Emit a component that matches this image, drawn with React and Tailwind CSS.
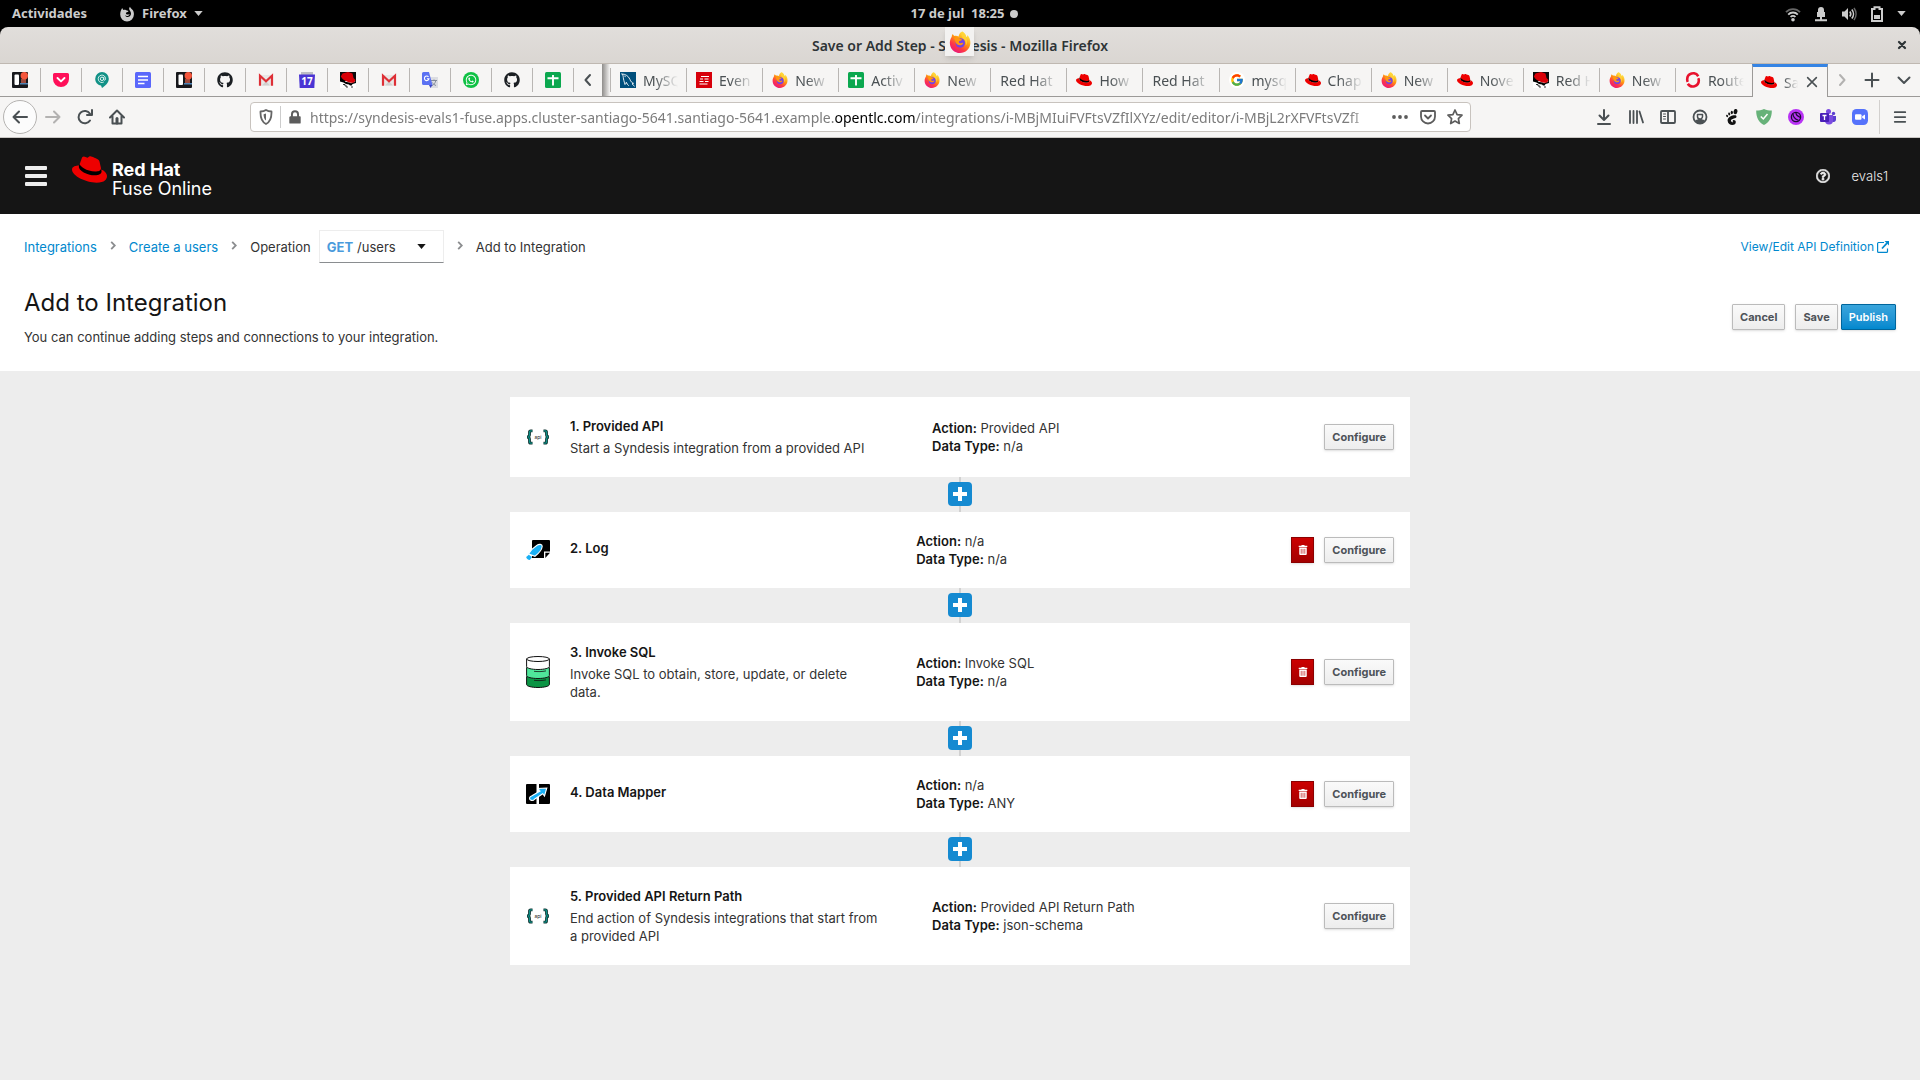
import React from "react";
import { FaGithub, FaWhatsapp, FaTrashAlt, FaRegQuestionCircle, FaCaretDown } from "react-icons/fa";
import { FcGoogle } from "react-icons/fc";

/* ---------- favicons ---------- */

function Svg({ children, size = "size-4", box = "0 0 16 16" }) {
  return (
    <svg viewBox={box} className={`${size} shrink-0`} fill="none" aria-hidden="true">
      {children}
    </svg>
  );
}

function Hat({ size = "size-4" }) {
  return (
    <Svg size={size} box="0 0 24 24">
      <ellipse cx="12.5" cy="11.8" rx="8" ry="4" transform="rotate(16 12.5 11.8)" fill="#000" />
      <path fill="#e00" d="M16.009 13.386c1.577 0 3.86-.326 3.86-2.202a1.765 1.765 0 0 0-.04-.431l-.94-4.08c-.216-.898-.406-1.305-1.982-2.093-1.223-.625-3.888-1.658-4.676-1.658-.733 0-.947.946-1.822.946-.842 0-1.467-.706-2.255-.706-.757 0-1.25.515-1.63 1.576 0 0-1.06 2.99-1.197 3.424a.81.81 0 0 0-.028.245c0 1.162 4.577 4.974 10.71 4.974m4.101-1.435c.218 1.032.218 1.14.218 1.277 0 1.765-1.984 2.745-4.593 2.745-5.895.004-11.06-3.451-11.06-5.734a2.326 2.326 0 0 1 .19-.925C2.746 9.415 0 9.794 0 12.217c0 3.969 9.405 8.861 16.851 8.861 5.71 0 7.149-2.582 7.149-4.62 0-1.605-1.387-3.425-3.887-4.512" />
    </Svg>
  );
}

function FirefoxLogo({ size = "size-4" }) {
  return (
    <Svg size={size} box="0 0 24 24">
      <defs>
        <linearGradient id="ff-body" x1="0.8" y1="0.05" x2="0.2" y2="1">
          <stop offset="0" stopColor="#fff14f" />
          <stop offset="0.4" stopColor="#ff980e" />
          <stop offset="0.7" stopColor="#ff3647" />
          <stop offset="1" stopColor="#e31587" />
        </linearGradient>
      </defs>
      <path fill="url(#ff-body)" d="M14.5.5c3 1.800 4 4 4.300 6 1-.2 1.200-1.500 1.200-2.200 2.400 2.500 3.500 5.500 3.300 9C23 19.500 18 24 12 24S.9 19.200.9 13c0-2.500.8-4.700 2-6.400 0-1.400.5-2.500 1.200-3.300.5 1 1.100 1.700 1.900 2.100 1.700-.3 3.200-.1 4.500.7C10.800 3.500 12 1.500 14.500.5z" />
      <circle cx="12.300" cy="13" r="5.200" fill="#7542e5" />
      <path fill="#ff980e" d="M5.500 7.500c2.200-1 4.800-.5 6.300.8l2.400 1c-.3 1.200-1.700 1.500-2.900 1.700-.8.500-.6 1.400.1 2.100 1.200.6 2.500-.1 3.500-.3.700.2.700.9.200 1.300-2.100 2.300-6.400 1.500-7.600-1.400C6.500 11 6.200 9 5.500 7.500z" />
      <path fill="#ffd43a" d="M14.500.5c3 1.800 4.500 4.500 4.400 7.500 1.400 2.500 1.200 6-.7 8.200.6-3.200 0-5.800-2-7.500C14 7 12.600 4 14.500.5z" opacity=".85" />
    </Svg>
  );
}

const Board = () => (
  <Svg>
    <rect width="16" height="16" rx="1" fill="#17181c" />
    <rect x="2.500" y="2.500" width="4.500" height="10.500" rx="1" fill="#fff" />
    <rect x="9" y="7" width="5" height="4" fill="#9c4a3c" />
    <rect x="8" y="11" width="8" height="1.500" fill="#4f83b5" />
    <circle cx="12.300" cy="3.800" r="3.700" fill="#f4563c" />
  </Svg>
);
const Pocket = () => (
  <Svg>
    <path d="M1.500 1h13A1.500 1.500 0 0 1 16 2.500V7a8 8 0 0 1-16 0V2.500A1.500 1.500 0 0 1 1.500 1z" fill="#ff1059" />
    <path d="m4.500 6 3.500 3.400L11.500 6" stroke="#fff" strokeWidth="1.900" strokeLinecap="round" strokeLinejoin="round" />
  </Svg>
);
const Pin = () => (
  <Svg>
    <path d="M8 0a6.800 6.800 0 0 1 6.800 6.800C14.800 11 11 14 8 16l-1-2.500C3.500 13 1.200 10.300 1.200 6.800A6.800 6.800 0 0 1 8 0z" fill="#129287" />
    <circle cx="8" cy="6.800" r="1.700" stroke="#e8f5f4" strokeWidth="1" />
    <path d="M9.800 5v2.300c0 1.400 1.800 1.200 1.800-.5A3.700 3.700 0 1 0 9.800 10" stroke="#e8f5f4" strokeWidth=".9" />
  </Svg>
);
const Doc = () => (
  <Svg>
    <rect width="16" height="16" rx="1.500" fill="#5a67fb" />
    <path d="M3 4.500h10M3 8h10M3 11.500h6.500" stroke="#fff" strokeWidth="1.700" />
  </Svg>
);
const GitHub = () => <FaGithub className="size-4 shrink-0 text-[#1b1f23]" aria-hidden="true" />;
const Gmail = () => (
  <Svg>
    <path d="M2 3h12v10.500H2z" fill="#e9e7e6" />
    <path d="M4 13.500 8 9l4 4.500z" fill="#d2d0cf" />
    <path d="M2 13.700V3.800l6 5.400 6-5.400v9.900" stroke="#de2f36" strokeWidth="2.200" />
  </Svg>
);
const Calendar = () => (
  <Svg>
    <path d="M2 0h12v4H2z" fill="#bdbdc4" />
    <path d="M0 2.500h16L15.300 16H.7z" fill="#4a35d4" />
    <text x="8" y="12.500" textAnchor="middle" fill="#fff" fontSize="10" fontWeight="700" fontFamily="Noto Sans, sans-serif">17</text>
  </Svg>
);
const Shadowman = () => (
  <Svg>
    <path d="M0 0h16v9H0z" fill="#0a0a0a" />
    <path d="M0 9h16v7H0z" fill="#fff" />
    <path d="M2.500 1.500 8 0l4.500 1.500 1 4.500 2 2-1.500 3-5-.5L3 7.500.8 4.500z" fill="#d90007" />
    <path d="m3 7.500 2.500 2.300L9 10.500l2 .8 3-.8 2-2v2.500l-3.500 1-.8 1.500H10L9 12.500l-3-.5-2.500-1.500L0 9.500V7z" fill="#000" />
    <path d="M3 12.500h2v1.500h2V16M11 15h2" stroke="#000" strokeWidth=".8" />
  </Svg>
);
const Translate = () => (
  <Svg>
    <path d="M6 5h10v11H8.500z" fill="#dcdde2" />
    <path d="M9 8.500h6M12 7.500v1M10 13.500c2-.8 3.300-2.500 3.800-5M10.500 10.500c.8 1.500 2 2.500 3.500 3" stroke="#7c8493" strokeWidth=".9" />
    <path d="M0 1.500A1.500 1.500 0 0 1 1.500 0H7l3.500 13H1.500A1.500 1.500 0 0 1 0 11.500z" fill="#5b71f2" />
    <path d="M7 13h3.500L8.500 16z" fill="#3b46c4" />
    <path d="M6.500 4.800A2.300 2.300 0 1 0 7 6.700H4.900" stroke="#fff" strokeWidth="1.100" />
  </Svg>
);
const WhatsApp = () => (
  <span className="flex size-4 shrink-0 items-center justify-center rounded-full bg-[#0fc144]">
    <FaWhatsapp className="size-3 text-white" aria-hidden="true" />
  </span>
);
const Sheet = () => (
  <Svg>
    <rect width="16" height="16" rx="1.500" fill="#0ba84f" />
    <path d="M2.500 6.200h11M8 3v10.500" stroke="#fff" strokeWidth="1.900" />
  </Svg>
);
const MySql = () => (
  <Svg>
    <rect width="16" height="16" fill="#004f7c" />
    <path d="M2 2c3.500 0 6.500 2 8 5.500.7 2 1.700 3 3.500 3.800l-1.500.5 2.300 2.200M2 2c1 1.200 1.200 2 1.300 3.500C3.500 7.500 4 9 5 12.500c.8-.5 1-1.300 1.300-2.200.6 1.500 1.200 2.300 2.200 3.200M4.700 4.200l.6.300" stroke="#fff" strokeWidth=".9" strokeLinecap="round" />
  </Svg>
);
const EventIcon = () => (
  <Svg>
    <rect width="16" height="16" fill="#d7000b" />
    <path d="M5 4.500h8M4 7h3M8.500 7h4M3.500 9.500h4M9 9.500h3.500M3.500 12h8" stroke="#fff" strokeWidth="1.200" />
  </Svg>
);
const Google = () => (
  <span className="flex size-4 shrink-0 items-center justify-center rounded-full bg-white">
    <FcGoogle className="size-[14px]" aria-hidden="true" />
  </span>
);
const OpenShift = () => (
  <Svg>
    <path d="M13.300 4.200A6 6 0 0 0 2.200 7.500c0 1 .2 1.600.5 2.500" stroke="#e8112d" strokeWidth="2.600" />
    <path d="M2.800 11.800A6 6 0 0 0 13.800 8.500c0-1-.2-1.700-.6-2.500" stroke="#e8112d" strokeWidth="2.600" />
    <path d="M.5 11.500 4.800 9.800M11.300 6.500 15.500 4.800" stroke="#f6f5f4" strokeWidth=".8" />
  </Svg>
);

const pinned = [
  ["Board", Board], ["Pocket", Pocket], ["Chat", Pin], ["Document", Doc], ["Board 2", Board],
  ["GitHub", GitHub], ["Gmail", Gmail], ["Calendar", Calendar], ["Red Hat", Shadowman], ["Gmail 2", Gmail],
  ["Translate", Translate], ["WhatsApp", WhatsApp], ["GitHub 2", GitHub], ["Sheets", Sheet],
];

const tabs = [
  ["MySQ", MySql], ["Even", EventIcon], ["New", FirefoxLogo], ["Activ", Sheet],
  ["New", FirefoxLogo], ["Red Hat", null], ["How", Hat], ["Red Hat", null],
  ["mysq", Google], ["Chap", Hat], ["New", FirefoxLogo], ["Nove", Hat],
  ["Red H", Shadowman], ["New", FirefoxLogo], ["Route", OpenShift],
];

/* ---------- browser chrome ---------- */

function Glyph({ d, size = "size-4", w = 2, children }) {
  return (
    <svg viewBox="0 0 16 16" className={`${size} shrink-0`} fill="none" stroke="currentColor" strokeWidth={w} strokeLinecap="round" strokeLinejoin="round" aria-hidden="true">
      {d && <path d={d} />}
      {children}
    </svg>
  );
}

function IconButton({ label, children, className = "" }) {
  return (
    <button type="button" aria-label={label} className={`flex items-center justify-center ${className}`}>
      {children}
    </button>
  );
}

function SystemBar() {
  return (
    <div className="grid h-[27px] grid-cols-3 items-center bg-black text-[13px] font-bold text-[#ccc]">
      <div className="flex items-center pl-3">
        <button type="button" className="mr-8">Actividades</button>
        <button type="button" className="flex items-center gap-[7px]">
          <Svg>
            <path d="M1.200 8.500c0-2.500.8-4.500 2-6.500l1 2c.8-.4 2-.4 3 .2L9.500 5c-.2 1-1.300 1.200-2.200 1.400-.8.6-.3 1.600.5 2 1 .5 1.800-.4 2.800-.2-.5 2-3.300 2.300-4.600 1C7 12 11.500 11.500 12 8c.2-2.500-1.500-3.500-1.800-4.800C10 2 10.600 1.300 11 .8c.5 1.500 1.700 2 2.700 3.200 1 1.300 1.300 3 1.200 4.500A7 7 0 0 1 8 15.500a7 7 0 0 1-6.800-7z" fill="#ccc" />
          </Svg>
          Firefox
          <svg viewBox="0 0 10 6" className="h-[5px] w-[9px]" fill="#ccc" aria-hidden="true"><path d="M0 0h10L5 6z" /></svg>
        </button>
      </div>
      <button type="button" className="flex items-center justify-center gap-[6px] pl-[9px]">
        <span className="whitespace-pre">17 de jul  18:25</span>
        <span className="size-2 rounded-full bg-[#ccc]" />
      </button>
      <button type="button" aria-label="System menu" className="flex items-center justify-end gap-3 pr-[14px]">
        <Svg>
          <path d="M1 6.200a9.500 9.500 0 0 1 14 0" stroke="#666" strokeWidth="1.800" />
          <path d="M3.200 8.600a6.500 6.500 0 0 1 9.600 0M5.600 11a3.200 3.200 0 0 1 4.800 0" stroke="#ccc" strokeWidth="1.800" />
          <circle cx="8" cy="13.800" r="1.800" fill="#ccc" />
        </Svg>
        <Svg>
          <path d="M4 11V6h1V4a3 3 0 0 1 6 0v2h1v5z" fill="#ccc" />
          <path d="M2 14.200h12M8 11v3" stroke="#ccc" strokeWidth="2" />
        </Svg>
        <Svg>
          <path d="M1 5.500h2.500L7 2v12l-3.500-3.500H1z" fill="#ccc" />
          <path d="M8.800 5.500a4 4 0 0 1 0 5M10.800 3.500a7 7 0 0 1 0 9" stroke="#ccc" strokeWidth="1.600" />
          <path d="M13 2a10 10 0 0 1 0 12" stroke="#666" strokeWidth="1.600" />
        </Svg>
        <Svg>
          <path d="M5.500 3V1.200h5V3H13v12H3V3z" stroke="#ccc" strokeWidth="2" />
          <path d="M5 9h6v4H5z" fill="#ccc" />
        </Svg>
        <svg viewBox="0 0 10 6" className="h-[5px] w-[9px]" fill="#ccc" aria-hidden="true"><path d="M0 0h10L5 6z" /></svg>
      </button>
    </div>
  );
}

function TitleBar() {
  return (
    <div className="relative flex h-[37px] items-center justify-center rounded-t-lg border-b border-[#bfb8b1] bg-linear-to-b from-[#e1dedb] to-[#dad6d2] text-[14px] font-semibold text-[#2e3436]">
      <span>Save or Add Step - Syndesis - Mozilla Firefox</span>
      <div className="absolute top-0 left-1/2 -ml-[15px] flex h-[29px] w-[29px] items-center justify-center bg-[#f3f2f1] shadow-md">
        <FirefoxLogo size="size-[22px]" />
      </div>
      <div className="absolute right-3 flex">
        <IconButton label="Close window"><Glyph size="size-[12px]" w={3} d="M4 4l8 8M12 4l-8 8" /></IconButton>
      </div>
    </div>
  );
}

function Divider() {
  return <span className="h-6 w-px shrink-0 bg-[#b9b6b3]" />;
}

function TabStrip() {
  return (
    <div className="flex h-[33px] border-b border-[#9c9a98] bg-[#f6f5f4] text-[14px] text-[#4a5053]">
      {pinned.map(([name, Icon]) => (
        <div key={name} className="flex w-[41px] shrink-0 items-center">
          <button type="button" aria-label={name} className="flex flex-1 justify-center"><Icon /></button>
          <Divider />
        </div>
      ))}
      <IconButton label="Scroll tabs left" className="w-7 shrink-0 text-[#4a5053]"><Glyph d="M10 3 5.500 8l4.500 5" /></IconButton>
      <div className="w-2 shrink-0 bg-linear-to-r from-[#8f8d8b] to-[#f6f5f4]" />
      <div className="flex shrink-0 items-center"><Divider /></div>
      <div className="grid min-w-0 flex-1 grid-cols-[repeat(16,minmax(0,1fr))]">
        {tabs.map(([name, Icon], i) => (
          <div key={i} className="flex min-w-0 items-center">
            <button type="button" className="flex min-w-0 flex-1 items-center gap-[7px] pl-[9px]">
              {Icon && <Icon />}
              <span className="mr-2 min-w-0 flex-1 overflow-hidden text-left whitespace-nowrap [mask-image:linear-gradient(to_left,transparent,black_24px)]">{name}</span>
            </button>
            {i < tabs.length - 1 && <Divider />}
          </div>
        ))}
        <div className="-mb-px flex min-w-0 items-center gap-[7px] border-x border-t-3 border-x-[#9c9a98] border-t-[#3584e4] bg-[#f6f5f4] pr-2 pl-2">
          <Hat />
          <span className="min-w-0 flex-1 overflow-hidden whitespace-nowrap [mask-image:linear-gradient(to_right,black,transparent)]">Sa</span>
          <IconButton label="Close tab"><Glyph size="size-[14px]" d="M3 3l10 10M13 3 3 13" w={1.8} /></IconButton>
        </div>
      </div>
      <div className="flex shrink-0 items-center">
        <IconButton label="Scroll tabs right" className="w-7 text-[#b3b2b1]"><Glyph d="m6 3 4.500 5L6 13" /></IconButton>
        <IconButton label="New tab" className="w-8"><Glyph d="M8 1.500v13M1.500 8h13" /></IconButton>
        <IconButton label="List all tabs" className="w-8"><Glyph d="m2.500 5.500 5.500 5.500 5.500-5.500" /></IconButton>
      </div>
    </div>
  );
}

function NavBar() {
  return (
    <div className="flex h-[41px] items-center border-b border-[#c9c6c3] bg-[#f6f5f4] text-[#4a5053]">
      <div className="flex shrink-0 items-center pl-[3px]">
        <IconButton label="Back" className="size-[34px] rounded-full border border-[#b5b3b1] bg-[#fcfcfc]"><Glyph d="M15 8H1.500M7 2.500 1.500 8 7 13.500" /></IconButton>
        <IconButton label="Forward" className="w-8 text-[#b3b2b1]"><Glyph d="M1 8h13.500M9 2.500 14.500 8 9 13.500" /></IconButton>
        <IconButton label="Reload" className="w-8"><Glyph d="M13 11.500A6.200 6.200 0 1 1 13 4.800M15 1v5h-5" /></IconButton>
        <IconButton label="Home" className="w-8">
          <Glyph d="M1 8.500 8 1.500l7 7M3.500 7.500V14.500h9V7.500"><path d="M8 14V9.500" strokeWidth="3" /></Glyph>
        </IconButton>
      </div>
      <div className="w-[117px] shrink" />
      <div className="flex h-[30px] min-w-0 flex-1 items-center rounded-[4px] border border-[#c8c3be] bg-white">
        <IconButton label="Site protection" className="w-[29px] shrink-0 text-[#666]">
          <Glyph d="M8 1c1.500 1 3.500 1.500 5.500 1.500C13.700 8.500 12 13 8 15 4 13 2.300 8.500 2.500 2.500 4.500 2.500 6.500 2 8 1z" w={1.8}><path d="M8 4.500v7C6.300 10.300 5.600 8 5.600 5.200z" fill="currentColor" strokeWidth="0" /></Glyph>
        </IconButton>
        <span className="h-[22px] w-px bg-[#ccc]" />
        <IconButton label="Connection secure" className="w-7 shrink-0">
          <Svg size="size-[14px]">
            <path d="M2.500 7h11A1 1 0 0 1 14.500 8v6.500a1 1 0 0 1-1 1h-11a1 1 0 0 1-1-1V8z" fill="#5c5c5c" />
            <path d="M4.500 8V5a3.500 3.500 0 0 1 7 0v3" stroke="#5c5c5c" strokeWidth="2.200" />
          </Svg>
        </IconButton>
        <div role="textbox" aria-label="Address" contentEditable suppressContentEditableWarning spellCheck={false} className="ml-px min-w-0 flex-1 overflow-hidden text-[14px] whitespace-nowrap text-[#7c7c7c] outline-none [mask-image:linear-gradient(to_right,black_97%,transparent)]">
          https://syndesis-evals1-fuse.apps.cluster-santiago-5641.santiago-5641.example.<span className="text-black">opentlc.com</span>/integrations/i-MBjMIuiFVFtsVZfIlXYz/edit/editor/i-MBjL2rXFVFtsVZfI
        </div>
        <div className="flex shrink-0 items-center pl-1 text-[#5c5c5c]">
          <IconButton label="Page actions" className="w-8">
            <Svg><g fill="currentColor"><circle cx="2" cy="8" r="1.900" /><circle cx="8" cy="8" r="1.900" /><circle cx="14" cy="8" r="1.900" /></g></Svg>
          </IconButton>
          <IconButton label="Save to Pocket" className="w-6">
            <Glyph d="M2 2h12a1 1 0 0 1 1 1v4.500a7 7 0 0 1-14 0V3a1 1 0 0 1 1-1z" w={1.800}><path d="m5 6.500 3 3 3-3" /></Glyph>
          </IconButton>
          <IconButton label="Bookmark" className="w-[30px]">
            <Glyph d="m8 1 2.100 4.600 4.900.6-3.600 3.400.9 4.900L8 12.100l-4.300 2.400.9-4.900L1 6.200l4.900-.6z" w={1.700} />
          </IconButton>
        </div>
      </div>
      <div className="w-[117px] shrink" />
      <div className="flex shrink-0 items-center">
        <IconButton label="Downloads" className="w-8"><Glyph d="M8 1v9.500M3.500 6.500 8 11l4.500-4.500M2 15h12" /></IconButton>
        <IconButton label="Library" className="w-8"><Glyph d="M2 2v12M5.500 2v12M9 2v12M11.500 2.500 15 13.500" w={1.800} /></IconButton>
        <IconButton label="Sidebars" className="w-8">
          <Glyph d="M2 2h12a1 1 0 0 1 1 1v10a1 1 0 0 1-1 1H2a1 1 0 0 1-1-1V3a1 1 0 0 1 1-1zM8 2v12" w={1.800}><path d="M3.500 5h2M3.500 7.500h2M3.500 10h2" strokeWidth="1" /></Glyph>
        </IconButton>
        <IconButton label="Account" className="w-8">
          <Glyph w={1.800}><circle cx="8" cy="8" r="6.500" /><path d="M5.500 5.500h5v2a2.500 2.500 0 0 1-5 0z" strokeWidth="1.500" /><path d="M3.500 11.500c2-2 7-2 9 0L11 14H5z" fill="currentColor" strokeWidth="0" /></Glyph>
        </IconButton>
        <IconButton label="GNOME Shell integration" className="w-8">
          <Svg>
            <g fill="#111">
              <ellipse cx="11.500" cy="2.600" rx="1.900" ry="2.700" transform="rotate(12 11.500 2.600)" />
              <ellipse cx="7.800" cy="3.500" rx="1.100" ry="1.700" />
              <ellipse cx="5.200" cy="4.900" rx="1" ry="1.500" transform="rotate(-15 5.200 4.900)" />
              <ellipse cx="3.100" cy="6.900" rx=".9" ry="1.300" transform="rotate(-25 3.100 6.900)" />
              <path d="M11.500 6.200C8 6 3.300 8 3.600 11.800 3.900 14.700 6.200 16 8.200 16c2.300 0 3.700-1.200 3.600-3-.1-1.500-1.600-2.300-2.700-1.700-.9.500-.4 1.500.2 1.800-1.300.7-2.600-.6-2.300-2 .4-1.700 5.300-1.500 5.500-3.200 0-1-.3-1.600-1-1.700z" />
            </g>
          </Svg>
        </IconButton>
        <IconButton label="Ad blocker" className="w-8">
          <Svg><path d="M8 0c2.500 1 5 1.500 7.800 1.500C16 8.500 13 13.500 8 16 3 13.500 0 8.500.2 1.500 3 1.500 5.500 1 8 0z" fill="#67b279" /><path d="m4.800 7.500 2.500 2.500L11.500 5" stroke="#fff" strokeWidth="1.500" /></Svg>
        </IconButton>
        <IconButton label="Tor" className="w-8">
          <Svg><circle cx="8" cy="8" r="8" fill="#b833f4" /><circle cx="8" cy="8" r="4.600" stroke="#1d0a35" strokeWidth="1.300" /><path d="M8 3.500c-.5 2.500 1.800 3.800 4.300 5M5 4.800c0 3.500 2.500 5.500 5.500 6.500" stroke="#1d0a35" strokeWidth="1.200" /></Svg>
        </IconButton>
        <IconButton label="Teams" className="w-8">
          <Svg>
            <circle cx="13.500" cy="4.500" r="1.700" fill="#5b3fd0" /><path d="M11.500 7H16v4a2.500 2.500 0 0 1-4.500 1z" fill="#5b3fd0" />
            <circle cx="8.500" cy="2.500" r="2.500" fill="#7b4be0" /><path d="M5 6h8v5.500a4 4 0 0 1-8 0z" fill="#7b4be0" />
            <rect y="4" width="9" height="9" rx="1" fill="#4a1fb8" /><path d="M2.500 6.500h4M4.500 6.500v4.500" stroke="#fff" strokeWidth="1.300" />
          </Svg>
        </IconButton>
        <IconButton label="Zoom" className="w-8">
          <Svg><rect width="16" height="16" rx="4.500" fill="#5572fb" /><rect x="3" y="5.200" width="6.500" height="5.600" rx="1" fill="#fff" /><path d="m10.200 7.300 2.800-1.900v5.200l-2.800-1.900z" fill="#fff" /></Svg>
        </IconButton>
        <span className="ml-[3px] h-[34px] w-px bg-[#d2d0ce]" />
        <IconButton label="Menu" className="w-10"><Glyph size="size-[14px]" d="M2 2.500h12M2 8h12M2 13.500h12" /></IconButton>
      </div>
    </div>
  );
}

/* ---------- application ---------- */

function AppHeader() {
  return (
    <header className="flex h-[76px] items-center bg-[#151515] text-white">
      <IconButton label="Toggle navigation" className="ml-[25px] text-[#ededed]">
        <svg viewBox="0 0 22 20" className="h-5 w-[22px]" fill="currentColor" aria-hidden="true">
          <rect width="22" height="4" rx="1" /><rect y="8" width="22" height="4" rx="1" /><rect y="16" width="22" height="4" rx="1" />
        </svg>
      </IconButton>
      <a href="#home" className="ml-[25px] flex items-start gap-[5px] self-start pt-[14px]">
        <Hat size="size-[35px]" />
        <span className="mt-2 text-[18px] leading-[19px]">
          <b className="block font-bold">Red Hat</b>
          <span className="block">Fuse Online</span>
        </span>
      </a>
      <div className="ml-auto flex items-center gap-[22px] pr-8 text-[#ededed]">
        <IconButton label="Help"><FaRegQuestionCircle className="size-[14px]" stroke="currentColor" strokeWidth="24" aria-hidden="true" /></IconButton>
        <button type="button" className="font-light">evals1</button>
      </div>
    </header>
  );
}

function Chevron() {
  return (
    <svg viewBox="0 0 6 10" className="mx-[13px] mb-[2px] h-[9px] w-[6px]" fill="none" stroke="#8b8d8f" strokeWidth="2" aria-hidden="true">
      <path d="m1 1 4 4-4 4" />
    </svg>
  );
}

function PageHeading() {
  return (
    <section className="bg-white px-6 pt-4 pb-[25px]">
      <div className="flex items-center justify-between">
        <nav aria-label="Breadcrumb" className="flex h-[33px] items-center">
          <a href="#integrations" className="text-[#0088ce]">Integrations</a>
          <Chevron />
          <a href="#create" className="text-[#0088ce]">Create a users</a>
          <Chevron />
          <span>Operation</span>
          <button type="button" aria-haspopup="listbox" className="ml-2 flex h-[33px] w-[125px] items-center border border-[#ededed] border-b-[#8a8d90] px-[7px]">
            <b className="font-bold text-[#4a9bdc]">GET</b>
            <span className="ml-1">/users</span>
            <svg viewBox="0 0 10 6" className="mr-[10px] ml-auto h-[5px] w-[9px]" fill="#151515" aria-hidden="true"><path d="M0 0h10L5 6z" /></svg>
          </button>
          <Chevron />
          <span>Add to Integration</span>
        </nav>
        <a href="#definition" className="mr-[7px] flex items-center gap-[3px] text-[12px] text-[#0088ce]">
          View/Edit API Definition
          <svg viewBox="0 0 12 12" className="size-3" fill="none" stroke="currentColor" aria-hidden="true">
            <path d="M7 1.500H1.500A1 1 0 0 0 .6 2.500v7.900a1 1 0 0 0 1 1h7.900a1 1 0 0 0 1-1V7.500" strokeWidth="1.200" />
            <path d="M5 7.500 10 2.200" strokeWidth="1.700" />
            <path d="M7.500 0H12v4.500z" fill="currentColor" stroke="none" />
          </svg>
        </a>
      </div>
      <div className="mt-6 flex items-center justify-between">
        <div>
          <h1 className="text-[24px] leading-8 text-[#151515]">Add to Integration</h1>
          <p className="mt-[9px]">You can continue adding steps and connections to your integration.</p>
        </div>
        <div className="flex">
          <ActionButton>Cancel</ActionButton>
          <div className="ml-[10px] flex gap-[3px]">
            <ActionButton>Save</ActionButton>
            <button type="button" className="h-[26px] rounded-[1px] border border-[#00659c] bg-linear-to-b from-[#39a5dc] to-[#0088ce] px-[7px] text-[11px] font-semibold text-white shadow-sm">Publish</button>
          </div>
        </div>
      </div>
    </section>
  );
}

function ActionButton({ children }) {
  return (
    <button type="button" className="h-[26px] rounded-[1px] border border-[#bbb] bg-linear-to-b from-[#fafafa] to-[#ededed] px-[7px] text-[11px] font-bold text-[#4d5258] shadow-sm">
      {children}
    </button>
  );
}

/* ---------- step icons ---------- */

const ApiIcon = () => (
  <svg viewBox="0 0 24 16" className="h-4 w-6" fill="none" aria-hidden="true">
    <path d="M6.500 1.800H4.700c-.8 0-1.200.4-1.200 1.200v2.600C3.500 7 2.800 8 1 8c1.800 0 2.500 1 2.500 2.400V13c0 .8.4 1.200 1.200 1.200h1.800M17.500 1.800h1.800c.8 0 1.200.4 1.200 1.200v2.600c0 1.400.7 2.400 2.500 2.400-1.800 0-2.500 1-2.500 2.400V13c0 .8-.4 1.200-1.200 1.200h-1.800" stroke="#10302f" strokeWidth="2.800" />
    <path d="M6.200 1.800H4.700c-.8 0-1.200.4-1.200 1.200v2.600C3.500 7 2.800 8 1.500 8c1.300 0 2 1 2 2.400V13c0 .8.4 1.200 1.200 1.200h1.500M17.800 1.800h1.500c.8 0 1.200.4 1.200 1.200v2.600c0 1.400.7 2.400 2 2.400-1.300 0-2 1-2 2.400V13c0 .8-.4 1.200-1.200 1.200h-1.500" stroke="#0c8f85" strokeWidth="1.200" />
    <text x="12" y="9.800" textAnchor="middle" fontSize="5" fontFamily="Inter, sans-serif" fill="#222">api</text>
  </svg>
);
const LogIcon = () => (
  <svg viewBox="0 0 24 20" className="h-5 w-6" aria-hidden="true">
    <path d="M7 0h16a1 1 0 0 1 1 1v10.500h-6V18H6V1a1 1 0 0 1 1-1z" fill="#000" />
    <path d="M19.300 12.800H24L19.300 18z" fill="#000" />
    <path d="M11 5.300c2-1.500 5.500-1.300 5.200 1.200-.3 3-4.200 7.500-7.200 9.800L2.600 14C4 11.500 7.500 7.500 11 5.300z" fill="#19b0f5" stroke="#fff" strokeWidth="1.100" />
    <path d="M2.800 14.800 6 17l-2.200 3C2 20 .2 18.500.2 17z" fill="#19b0f5" />
  </svg>
);
const DatabaseIcon = () => (
  <svg viewBox="0 0 24 32" className="h-8 w-6" stroke="#111" strokeWidth="1" aria-hidden="true">
    <path d="M.6 20.500v8c0 1.700 5 3 11.400 3s11.400-1.300 11.400-3v-8z" fill="#0b9444" />
    <path d="M.6 11.500v8c0 1.700 5 3 11.400 3s11.400-1.300 11.400-3v-8z" fill="#4fe69a" />
    <path d="M.6 3v7.500c0 1.700 5 3 11.400 3s11.400-1.300 11.400-3V3z" fill="#fff" />
    <ellipse cx="12" cy="3" rx="11.400" ry="2.500" fill="#fff" />
    <path d="M8 15.300c4 .5 8 .4 12-.4M8 24.300c4 .5 8 .4 12-.4" fill="none" strokeWidth=".8" />
  </svg>
);
const MapperIcon = () => (
  <svg viewBox="0 0 24 20" className="h-5 w-6" aria-hidden="true">
    <path d="M1 0h9.500v20H1a1 1 0 0 1-1-1V1a1 1 0 0 1 1-1zM13 0h10a1 1 0 0 1 1 1v18a1 1 0 0 1-1 1H13z" fill="#000" />
    <path d="m5.500 12 8.500-5-2-2.500 8.800-.5-2.300 8-1.800-2.300-8.200 5.500C7 17.500 3.300 16.500 3.500 14c.2-1 1-1.500 2-2z" fill="#19b0f5" stroke="#fff" strokeWidth="1.100" />
  </svg>
);

const steps = [
  { title: "1. Provided API", text: "Start a Syndesis integration from a provided API", action: "Provided API", type: "n/a", Icon: ApiIcon },
  { title: "2. Log", action: "n/a", type: "n/a", Icon: LogIcon, removable: true },
  { title: "3. Invoke SQL", text: "Invoke SQL to obtain, store, update, or delete data.", action: "Invoke SQL", type: "n/a", Icon: DatabaseIcon, removable: true },
  { title: "4. Data Mapper", action: "n/a", type: "ANY", Icon: MapperIcon, removable: true },
  { title: "5. Provided API Return Path", text: "End action of Syndesis integrations that start from a provided API", action: "Provided API Return Path", type: "json-schema", Icon: ApiIcon },
];

function Step({ step }) {
  const { Icon } = step;
  return (
    <article className="flex items-center bg-white px-4 py-5">
      <div className="mr-5 flex w-6 shrink-0 justify-center"><Icon /></div>
      <div className="flex min-w-0 flex-1 items-center">
        <div className="w-[48%] shrink-0 pr-12">
          <h2 className="mb-1 font-semibold text-[#151515]">{step.title}</h2>
          {step.text && <p>{step.text}</p>}
        </div>
        <div>
          <p><b className="font-semibold text-[#151515]">Action:</b> {step.action}</p>
          <p><b className="font-semibold text-[#151515]">Data Type:</b> {step.type}</p>
        </div>
      </div>
      <div className="flex shrink-0 gap-[10px]">
        {step.removable && (
          <button type="button" aria-label="Delete step" className="flex h-[26px] w-[23px] items-center justify-center border border-[#8b0000] bg-linear-to-b from-[#c00] to-[#a30000] text-white shadow-sm">
            <FaTrashAlt className="size-[10px]" aria-hidden="true" />
          </button>
        )}
        <ActionButton>Configure</ActionButton>
      </div>
    </article>
  );
}

function Connector() {
  return (
    <div className="flex h-[35px] flex-col items-center">
      <span className="h-[5px] w-[2px] bg-[#d1d1d1]" />
      <button type="button" aria-label="Add step" className="flex size-6 items-center justify-center rounded-[4px] bg-[#158ad1]">
        <svg viewBox="0 0 14 14" className="size-[14px]" fill="none" stroke="#fff" strokeWidth="4" strokeLinecap="square" aria-hidden="true">
          <path d="M7 2v10M2 7h10" />
        </svg>
      </button>
      <span className="w-[2px] flex-1 bg-[#d1d1d1]" />
    </div>
  );
}

export default function App() {
  return (
    <div className="flex min-h-screen flex-col bg-black">
      <div className="font-['Noto_Sans','Open_Sans',sans-serif]">
        <SystemBar />
        <TitleBar />
        <TabStrip />
        <NavBar />
      </div>
      <div className="flex flex-1 flex-col bg-[#ededed] font-[Inter,sans-serif] text-[13px] leading-[18px] text-[#333]">
        <AppHeader />
        <PageHeading />
        <main className="mx-auto w-full max-w-[900px] pt-[26px] pb-10">
          {steps.map((step, i) => (
            <React.Fragment key={step.title}>
              {i > 0 && <Connector />}
              <Step step={step} />
            </React.Fragment>
          ))}
        </main>
      </div>
    </div>
  );
}
